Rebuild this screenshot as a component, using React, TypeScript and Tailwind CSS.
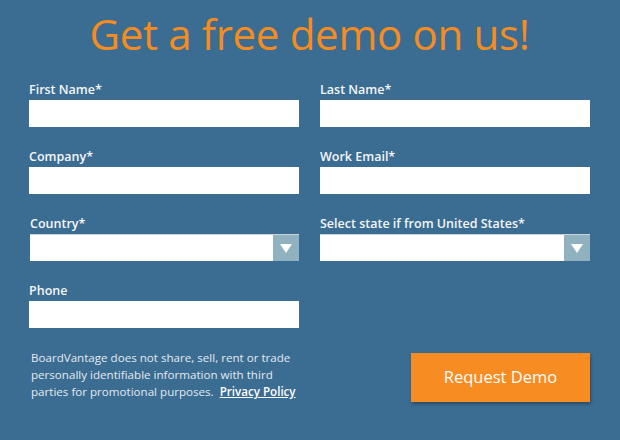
import React from "react";

function Field({ label }: { label: string }) {
  return (
    <div>
      <label className="block h-[20px] leading-[20px] text-[12.5px] font-semibold text-[#f3f6f9]">
        {label}
      </label>
      <input type="text" className="block w-full h-[27px] bg-white border-0 outline-none" />
    </div>
  );
}

function SelectField({ label, inset }: { label: string; inset?: boolean }) {
  return (
    <div className={inset ? "pl-px" : ""}>
      <label className="block h-[20px] leading-[20px] text-[12.5px] font-semibold text-[#f3f6f9]">
        {label}
      </label>
      <div className="flex h-[27px] bg-white border-t border-[#c9d3da]">
        <div className="flex-1" />
        <div className="w-[26px] bg-[#8fb1c0] flex items-center justify-center">
          <svg width="12" height="9" viewBox="0 0 12 9">
            <path d="M0 0 L12 0 L6 9 Z" fill="#ffffff" />
          </svg>
        </div>
      </div>
    </div>
  );
}

export default function App() {
  return (
    <div
      className="w-[620px] h-[440px] bg-[#3b6c91] pl-[29px] pr-[30px] pt-[8px] overflow-hidden"
      style={{ fontFamily: '"Open Sans", "Liberation Sans", sans-serif' }}
    >
      <h1 className="text-center text-[42px] leading-[52px] tracking-[-0.3px] text-[#f68b1f] mb-[20px]">
        Get a free demo on us!
      </h1>

      <div className="grid grid-cols-2 gap-x-[21px] gap-y-[20px]">
        <Field label="First Name*" />
        <Field label="Last Name*" />
        <Field label="Company*" />
        <Field label="Work Email*" />
        <SelectField label="Country*" inset />
        <SelectField label="Select state if from United States*" />
        <Field label="Phone" />
      </div>

      <div className="flex justify-between items-start mt-[21px]">
        <p className="w-[275px] pl-[2px] text-[11.6px] leading-[17px] text-[#e3eaf0]">
          BoardVantage does not share, sell, rent or trade personally identifiable information with third
          parties for promotional purposes.{" "}
          <a href="#" className="ml-[3px] font-semibold text-white underline">
            Privacy Policy
          </a>
        </p>
        <button className="mt-[4px] w-[179px] h-[49px] bg-[#f78c23] text-white text-[16.5px] shadow-[1px_2px_3px_rgba(0,0,0,0.3)]">
          Request Demo
        </button>
      </div>
    </div>
  );
}
